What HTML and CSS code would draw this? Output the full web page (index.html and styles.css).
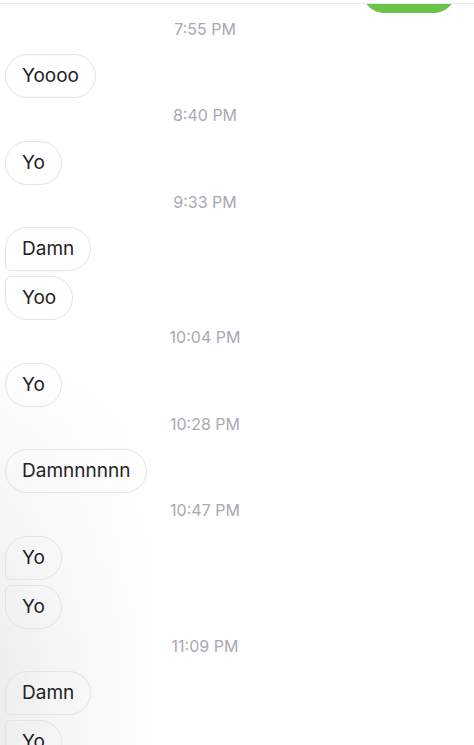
FILE: index.html
```html
<!DOCTYPE html>
<html lang="en">
<head>
<meta charset="utf-8">
<title>Messages</title>
<link rel="stylesheet" href="styles.css">
</head>
<body>
<div class="topbar"></div>
<main class="thread">
  <div class="group group-out">
    <div class="bubble bubble-out"></div>
  </div>

  <div class="stamp">7:55 PM</div>
  <div class="group">
    <div class="bubble">Yoooo</div>
  </div>

  <div class="stamp">8:40 PM</div>
  <div class="group">
    <div class="bubble">Yo</div>
  </div>

  <div class="stamp">9:33 PM</div>
  <div class="group">
    <div class="bubble">Damn</div>
    <div class="bubble">Yoo</div>
  </div>

  <div class="stamp">10:04 PM</div>
  <div class="group">
    <div class="bubble">Yo</div>
  </div>

  <div class="stamp">10:28 PM</div>
  <div class="group">
    <div class="bubble">Damnnnnnn</div>
  </div>

  <div class="stamp">10:47 PM</div>
  <div class="group">
    <div class="bubble">Yo</div>
    <div class="bubble">Yo</div>
  </div>

  <div class="stamp">11:09 PM</div>
  <div class="group">
    <div class="bubble">Damn</div>
    <div class="bubble">Yo</div>
  </div>
</main>
</body>
</html>
```

FILE: styles.css
```css
html, body {
  margin: 0;
  padding: 0;
}

body {
  width: 474px;
  height: 745px;
  overflow: hidden;
  font-family: "Inter", "Liberation Sans", sans-serif;
  background-color: #ffffff;
  background-image:
    linear-gradient(to bottom, #ffffff 0, #ffffff 340px, rgba(255,255,255,0) 660px),
    linear-gradient(to right, #eeeeee 0, #f5f5f5 55px, #ffffff 160px);
}

.topbar {
  height: 3px;
  border-bottom: 1px solid #e9e9ec;
  background: #ffffff;
}

.thread {
  display: flex;
  flex-direction: column;
  overflow: hidden;
}

.group {
  display: flex;
  flex-direction: column;
  align-items: flex-start;
  gap: 5px;
  padding-left: 5px;
}

.group-out {
  align-items: flex-end;
  padding-right: 18px;
  margin-top: -35px;
}

.bubble {
  box-sizing: border-box;
  height: 44px;
  border: 1px solid #e3e3e7;
  border-radius: 22px;
  padding: 10px 16px;
  font-size: 19px;
  line-height: 22px;
  color: #222226;
  white-space: nowrap;
}

.group .bubble:not(:last-child) {
  border-bottom-left-radius: 6px;
}

.group .bubble:not(:first-child) {
  border-top-left-radius: 6px;
}

.bubble-out {
  width: 94px;
  background: #6bc349;
  border-color: #6bc349;
  border-radius: 22px;
}

.stamp {
  margin: 7px 0 15.5px;
  padding-right: 64px;
  text-align: center;
  font-size: 16px;
  line-height: 20px;
  color: #a9a9b2;
}

.group-out + .stamp {
  margin-top: 5.5px;
}
```
